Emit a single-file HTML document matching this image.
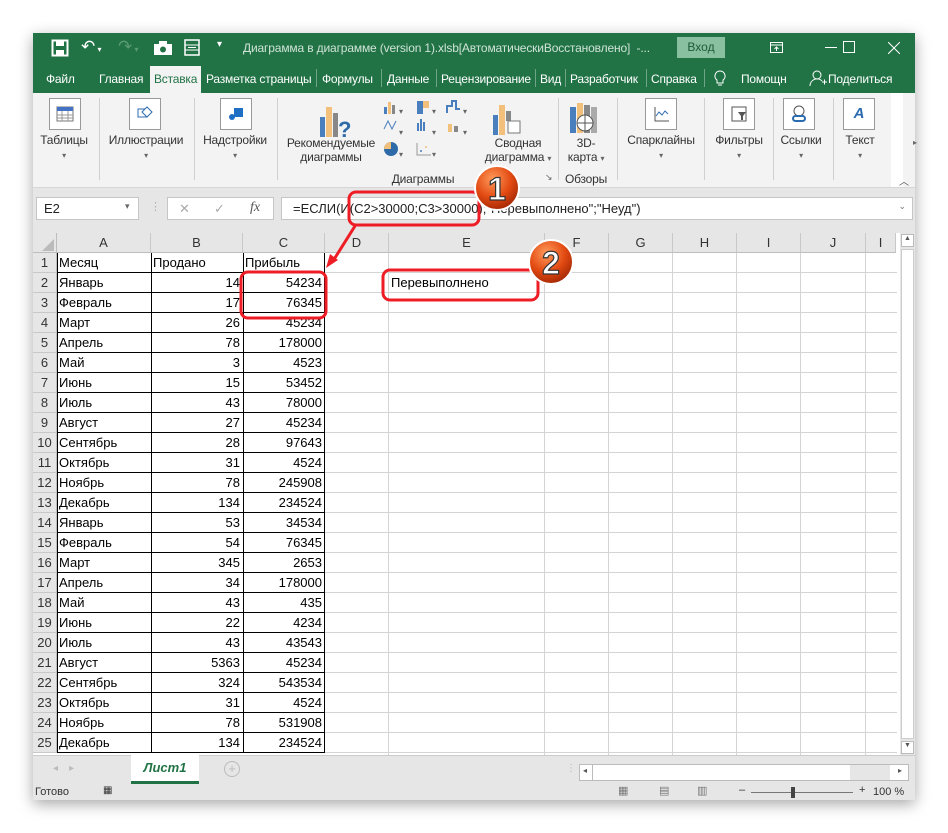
<!DOCTYPE html>
<html><head><meta charset="utf-8"><style>
*{box-sizing:border-box;margin:0;padding:0}
body{width:948px;height:833px;background:#fff;position:relative;overflow:hidden;font-family:"Liberation Sans","DejaVu Sans",sans-serif;font-size:13px;color:#222}
.abs{position:absolute}
#win{left:33px;top:33px;width:882px;height:767px;background:#e6e6e6;box-shadow:0 4px 14px rgba(0,0,0,.35)}
.tb{left:0;top:0;width:882px;height:30px;background:#217346;color:#cfe3d6}
.tabs{left:0;top:30px;width:882px;height:30px;background:#217346;color:#fff;font-size:12px;letter-spacing:-0.2px}
.tab{position:absolute;top:9px}
.rib{left:0;top:60px;width:882px;height:95px;background:#f3f3f3;border-bottom:1px solid #d6d6d6}
.rl{position:absolute;font-size:12px;color:#333;text-align:center;letter-spacing:-0.2px}
.ibox{position:absolute;width:32px;height:32px;border:1px solid #999;background:#fff}
.sep{position:absolute;top:5px;width:1px;height:82px;background:#d0d0d0}
.car{font-size:8px;color:#666}
.fb{left:0;top:163px;width:882px;height:30px}
.grid{left:0;top:200px;width:867px;height:522px;background:#fff}
.ch{position:absolute;top:0;height:20px;background:#e6e6e6;border-right:1px solid #c8c8c8;border-bottom:1px solid #bdbdbd;text-align:center;line-height:20px;font-size:13px;color:#333}
.rh{position:absolute;left:0;width:24px;height:20px;background:#e6e6e6;border-bottom:1px solid #c8c8c8;border-right:1px solid #bdbdbd;text-align:center;line-height:20px;font-size:13px;color:#333}
.c{position:absolute;height:20px;line-height:20px;font-size:13px;color:#000;white-space:nowrap;overflow:hidden;padding:0 2px}
</style></head><body>
<div id="win" class="abs">
 <div class="abs tb">
  <svg class="abs" style="left:18px;top:6px" width="18" height="18"><rect x="1.5" y="1.5" width="15" height="15" fill="none" stroke="#fff" stroke-width="2"/><rect x="5" y="2" width="8" height="5" fill="#fff"/><rect x="5" y="11" width="8" height="5" fill="#fff"/></svg>
  <div class="abs" style="left:48px;top:4px;color:#fff;font-size:17px">↶<span style="font-size:8px"> ▾</span></div>
  <div class="abs" style="left:85px;top:4px;color:#5a9a74;font-size:17px">↷<span style="font-size:8px"> ▾</span></div>
  <svg class="abs" style="left:121px;top:8px" width="18" height="14"><rect x="0" y="3" width="18" height="11" fill="#fff"/><rect x="5" y="0" width="8" height="4" fill="#fff"/><circle cx="9" cy="8.5" r="3" fill="#217346"/></svg>
  <svg class="abs" style="left:151px;top:6px" width="16" height="17"><rect x="1" y="1" width="14" height="15" fill="none" stroke="#fff" stroke-width="1.5"/><line x1="1" y1="6" x2="15" y2="6" stroke="#fff"/><line x1="1" y1="11" x2="15" y2="11" stroke="#fff"/><line x1="4" y1="8.5" x2="12" y2="8.5" stroke="#fff"/></svg>
  <div class="abs" style="left:184px;top:6px;color:#fff;font-size:10px">▾</div>
  <div class="abs" style="left:210px;top:8px;font-size:12px;letter-spacing:-0.15px">Диаграмма в диаграмме (version 1).xlsb[АвтоматическиВосстановлено]&nbsp; -...</div>
  <div class="abs" style="left:644px;top:4px;width:48px;height:21px;background:#89c09f;color:#1d5a36;text-align:center;line-height:21px;font-size:12px">Вход</div>
  <svg class="abs" style="left:737px;top:9px" width="13" height="11"><rect x=".5" y=".5" width="12" height="10" fill="none" stroke="#fff"/><line x1="0" y1="3" x2="13" y2="3" stroke="#fff"/><path d="M6.5 9V5M4.5 7l2-2 2 2" stroke="#fff" fill="none"/></svg>
  <div class="abs" style="left:792px;top:14px;width:12px;height:1px;background:#fff"></div>
  <div class="abs" style="left:810px;top:8px;width:12px;height:12px;border:1px solid #fff"></div>
  <svg class="abs" style="left:855px;top:9px" width="12" height="12"><path d="M0 0L12 12M12 0L0 12" stroke="#fff" stroke-width="1"/></svg>
 </div>
 <div class="abs tabs">
  <span class="tab" style="left:13px">Файл</span>
  <span class="tab" style="left:66px">Главная</span>
  <div class="abs" style="left:117px;top:3px;width:51px;height:27px;background:#f3f3f3;color:#217346;padding:6px 0 0 4px">Вставка</div>
  <span class="tab" style="left:173px">Разметка страницы</span>
  <span class="abs" style="left:283px;top:6px;width:1px;height:18px;background:#6fa487"></span>
  <span class="tab" style="left:289px">Формулы</span>
  <span class="abs" style="left:348px;top:6px;width:1px;height:18px;background:#6fa487"></span>
  <span class="tab" style="left:354px">Данные</span>
  <span class="abs" style="left:403px;top:6px;width:1px;height:18px;background:#6fa487"></span>
  <span class="tab" style="left:408px">Рецензирование</span>
  <span class="abs" style="left:502px;top:6px;width:1px;height:18px;background:#6fa487"></span>
  <span class="tab" style="left:507px">Вид</span>
  <span class="abs" style="left:532px;top:6px;width:1px;height:18px;background:#6fa487"></span>
  <span class="tab" style="left:537px">Разработчик</span>
  <span class="abs" style="left:613px;top:6px;width:1px;height:18px;background:#6fa487"></span>
  <span class="tab" style="left:618px">Справка</span>
  <span class="abs" style="left:671px;top:6px;width:1px;height:18px;background:#6fa487"></span>
  <svg class="abs" style="left:681px;top:7px" width="12" height="17"><path d="M6 1a5 5 0 0 0-3 9v3h6v-3a5 5 0 0 0-3-9zM4 15h4" stroke="#fff" fill="none"/></svg>
  <span class="tab" style="left:708px">Помощн</span>
  <svg class="abs" style="left:776px;top:6px" width="18" height="18"><circle cx="8" cy="6" r="4" stroke="#fff" fill="none"/><path d="M1 17a7 7 0 0 1 12-5M13 13h5M15.5 10.5v5" stroke="#fff" fill="none"/></svg>
  <span class="tab" style="left:795px">Поделиться</span>
 </div>
 <div class="abs rib">
  <div class="ibox" style="left:16px;top:5px"><svg width="30" height="30"><rect x="7" y="8" width="16" height="14" fill="#fff" stroke="#777"/><rect x="7" y="8" width="16" height="4" fill="#4472c4"/><path d="M7 16h16M7 19h16M12 12v10M18 12v10" stroke="#999"/></svg></div>
  <div class="rl" style="left:0;top:40px;width:62px">Таблицы<br><span class="car">▾</span></div>
  <div class="sep" style="left:66px"></div>
  <div class="ibox" style="left:96px;top:5px"><svg width="30" height="30"><rect x="8" y="10" width="8" height="8" fill="none" stroke="#2b6cb0"/><path d="M17 8l5 5-5 5-5-5z" fill="#fff" stroke="#2b6cb0"/></svg></div>
  <div class="rl" style="left:70px;top:40px;width:86px">Иллюстрации<br><span class="car">▾</span></div>
  <div class="sep" style="left:161px"></div>
  <div class="ibox" style="left:187px;top:5px"><svg width="30" height="30"><rect x="13" y="9" width="9" height="9" fill="#1f6fc5"/><circle cx="11" cy="18" r="3" fill="#1f6fc5"/></svg></div>
  <div class="rl" style="left:164px;top:40px;width:76px">Надстройки<br><span class="car">▾</span></div>
  <div class="sep" style="left:244px"></div>
  <svg class="abs" style="left:285px;top:10px" width="40" height="40"><rect x="2" y="14" width="5" height="20" fill="#4a7fbd"/><rect x="8" y="4" width="6" height="30" fill="#f2c07a"/><rect x="15" y="10" width="5" height="24" fill="#888"/><text x="20" y="34" font-size="22" font-weight="bold" fill="#2e6aa8" font-family="Liberation Sans">?</text></svg>
  <div class="rl" style="left:248px;top:43px;width:100px">Рекомендуемые<br>диаграммы</div>
  <svg class="abs" style="left:350px;top:6px" width="90" height="68"><rect x="1" y="8" width="3" height="7" fill="#4a7fbd"/><rect x="5" y="3" width="3" height="12" fill="#f2c07a"/><rect x="9" y="6" width="3" height="9" fill="#888"/><rect x="34" y="2" width="6" height="13" fill="#4a7fbd"/><rect x="40" y="2" width="6" height="7" fill="#f2c07a"/><path d="M64 14v-7h5v-5h4v8h4" stroke="#4a7fbd" stroke-width="2" fill="none"/><path d="M1 30l4-8 4 8 4-8" stroke="#4a7fbd" fill="none"/><rect x="34" y="24" width="2" height="8" fill="#4a7fbd"/><rect x="37" y="20" width="2" height="12" fill="#4a7fbd"/><rect x="40" y="23" width="2" height="9" fill="#4a7fbd"/><rect x="65" y="25" width="4" height="8" fill="#f2c07a"/><rect x="71" y="27" width="4" height="6" fill="#888"/><circle cx="8" cy="50" r="7" fill="#2e6aa8"/><path d="M8 50V43A7 7 0 0 0 1 50z" fill="#f2c07a"/><path d="M34 44v12h14" stroke="#999" fill="none"/><circle cx="38" cy="52" r="1" fill="#4a7fbd"/><circle cx="43" cy="48" r="1" fill="#f2c07a"/></svg>
  <div class="abs car" style="left:366px;top:14px">▾</div><div class="abs car" style="left:399px;top:14px">▾</div><div class="abs car" style="left:430px;top:14px">▾</div>
  <div class="abs car" style="left:366px;top:35px">▾</div><div class="abs car" style="left:399px;top:35px">▾</div><div class="abs car" style="left:430px;top:35px">▾</div>
  <div class="abs car" style="left:366px;top:57px">▾</div><div class="abs car" style="left:399px;top:57px">▾</div>
  <div class="rl" style="left:340px;top:79px;width:100px">Диаграммы</div>
  <svg class="abs" style="left:460px;top:10px" width="32" height="32"><rect x="0" y="12" width="5" height="20" fill="#4a7fbd"/><rect x="6" y="2" width="6" height="30" fill="#f2c07a"/><rect x="13" y="8" width="5" height="10" fill="#888"/><rect x="15" y="18" width="12" height="12" fill="#fff" stroke="#777"/></svg>
  <div class="rl" style="left:445px;top:43px;width:80px">Сводная<br>диаграмма <span class="car">▾</span></div>
  <div class="abs" style="left:512px;top:79px;font-size:9px;color:#666">↘</div>
  <div class="sep" style="left:525px"></div>
  <svg class="abs" style="left:537px;top:10px" width="30" height="32"><rect x="0" y="4" width="6" height="26" fill="#4a7fbd"/><rect x="7" y="0" width="6" height="30" fill="#f2c07a"/><rect x="14" y="2" width="6" height="28" fill="#888"/><rect x="21" y="4" width="6" height="26" fill="#aaa"/><circle cx="15" cy="20" r="8" fill="#fff" stroke="#555"/><path d="M7 20h16M15 12v16" stroke="#555"/></svg>
  <div class="rl" style="left:525px;top:43px;width:56px">3D-<br>карта <span class="car">▾</span></div>
  <div class="rl" style="left:525px;top:79px;width:56px">Обзоры</div>
  <div class="sep" style="left:584px"></div>
  <div class="ibox" style="left:612px;top:5px"><svg width="30" height="30"><path d="M9 8v14h14" stroke="#555" fill="none"/><path d="M10 17l3-4 3 3 3-4 3 3" stroke="#2b6cb0" fill="none"/></svg></div>
  <div class="rl" style="left:588px;top:40px;width:80px">Спарклайны<br><span class="car">▾</span></div>
  <div class="sep" style="left:671px"></div>
  <div class="ibox" style="left:690px;top:5px"><svg width="30" height="30"><rect x="8" y="8" width="14" height="14" fill="none" stroke="#555"/><path d="M14 13h8l-3 4v4h-2v-4z" fill="#555"/></svg></div>
  <div class="rl" style="left:675px;top:40px;width:62px">Фильтры<br><span class="car">▾</span></div>
  <div class="sep" style="left:740px"></div>
  <div class="ibox" style="left:750px;top:5px"><svg width="30" height="30"><circle cx="15" cy="12" r="5" fill="none" stroke="#555"/><rect x="9" y="17" width="12" height="5" rx="2.5" fill="none" stroke="#2b6cb0" stroke-width="2"/></svg></div>
  <div class="rl" style="left:740px;top:40px;width:56px">Ссылки<br><span class="car">▾</span></div>
  <div class="sep" style="left:800px"></div>
  <div class="ibox" style="left:810px;top:5px"><div style="color:#2b6cb0;font-style:italic;font-weight:bold;font-size:15px;text-align:center;line-height:30px">A</div></div>
  <div class="rl" style="left:803px;top:40px;width:48px">Текст<br><span class="car">▾</span></div>
  <div class="abs" style="left:858px;top:0;width:12px;height:94px;background:#fff"></div>
  <div class="abs car" style="left:880px;top:45px">▸</div>
  <div class="abs" style="left:866px;top:80px;font-size:10px;color:#555">︿</div>
 </div>
 <div class="abs fb">
  <div class="abs" style="left:3px;top:1px;width:103px;height:23px;background:#fff;border:1px solid #c6c6c6;padding:3px 0 0 7px">E2<span class="abs" style="left:88px;top:3px;font-size:9px;color:#666">▾</span></div>
  <div class="abs" style="left:117px;top:4px;color:#aaa;font-size:11px">⋮</div>
  <div class="abs" style="left:134px;top:1px;width:107px;height:23px;background:#fff;border:1px solid #c6c6c6;color:#aaa">
   <span class="abs" style="left:11px;top:3px">✕</span><span class="abs" style="left:46px;top:3px">✓</span><span class="abs" style="left:82px;top:2px;color:#555;font-style:italic;font-family:'Liberation Serif',serif;font-size:14px">fx</span></div>
  <div class="abs" style="left:248px;top:1px;width:632px;height:23px;background:#fff;border:1px solid #c6c6c6;padding:3px 0 0 11px">=ЕСЛИ(И(C2&gt;30000;C3&gt;30000);"Перевыполнено";"Неуд")<span class="abs" style="right:6px;top:3px;font-size:9px;color:#777">⌄</span></div>
 </div>
 <div class="abs grid">
  <div class="abs" style="left:0;top:0;width:24px;height:20px;background:#e6e6e6;border-right:1px solid #bdbdbd;border-bottom:1px solid #bdbdbd"><svg class="abs" style="left:9px;top:6px" width="12" height="12"><path d="M12 0V12H0z" fill="#bbb"/></svg></div>
  <div class="ch" style="left:24px;width:94px">A</div>
  <div class="ch" style="left:118px;width:92px">B</div>
  <div class="ch" style="left:210px;width:82px">C</div>
  <div class="ch" style="left:292px;width:64px">D</div>
  <div class="ch" style="left:356px;width:156px">E</div>
  <div class="ch" style="left:512px;width:64px">F</div>
  <div class="ch" style="left:576px;width:64px">G</div>
  <div class="ch" style="left:640px;width:64px">H</div>
  <div class="ch" style="left:704px;width:64px">I</div>
  <div class="ch" style="left:768px;width:65px">J</div>
  <div class="ch" style="left:833px;width:30px">I</div>
  <svg class="abs" style="left:24px;top:20px" width="840" height="502">
   <g stroke="#d4d4d4" stroke-width="1">
    <path d="M331.5 0V502M487.5 0V502M551.5 0V502M615.5 0V502M679.5 0V502M743.5 0V502M808.5 0V502"/>
    <path d="M268 19.5H840M268 39.5H840M268 59.5H840M268 79.5H840M268 99.5H840M268 119.5H840M268 139.5H840M268 159.5H840M268 179.5H840M268 199.5H840M268 219.5H840M268 239.5H840M268 259.5H840M268 279.5H840M268 299.5H840M268 319.5H840M268 339.5H840M268 359.5H840M268 379.5H840M268 399.5H840M268 419.5H840M268 439.5H840M268 459.5H840M268 479.5H840M268 499.5H840"/>
   </g>
   <g stroke="#000" stroke-width="1">
    <path d="M0.5 0V500M94.5 0V500M186.5 0V500M267.5 0V500"/>
    <path d="M0 19.5H268M0 39.5H268M0 59.5H268M0 79.5H268M0 99.5H268M0 119.5H268M0 139.5H268M0 159.5H268M0 179.5H268M0 199.5H268M0 219.5H268M0 239.5H268M0 259.5H268M0 279.5H268M0 299.5H268M0 319.5H268M0 339.5H268M0 359.5H268M0 379.5H268M0 399.5H268M0 419.5H268M0 439.5H268M0 459.5H268M0 479.5H268M0 499.5H268"/>
   </g>
  </svg>
  <div class="abs" style="left:867px;top:0;width:15px;height:522px;background:#e6e6e6"></div>
 </div>
 <div class="abs" style="left:867px;top:200px;width:15px;height:525px;background:#e6e6e6">
  <div class="abs" style="left:1px;top:1px;width:13px;height:13px;background:#fff;border:1px solid #bbb;font-size:7px;text-align:center;color:#555">▲</div>
  <div class="abs" style="left:1px;top:16px;width:13px;height:490px;background:#fff;border:1px solid #ccc"></div>
  <div class="abs" style="left:1px;top:508px;width:13px;height:13px;background:#fff;border:1px solid #bbb;font-size:7px;text-align:center;color:#555">▼</div>
 </div>
 <div class="abs" style="left:0;top:722px;width:882px;height:30px;background:#e6e6e6;border-top:1px solid #ccc">
  <span class="abs" style="left:20px;top:7px;color:#bbb;font-size:10px">◂ &nbsp;&nbsp; ▸</span>
  <div class="abs" style="left:98px;top:-1px;width:68px;height:29px;background:#fff;border-bottom:3px solid #217346;color:#217346;font-weight:bold;font-style:italic;text-align:center;line-height:26px;font-size:13px">Лист1</div>
  <span class="abs" style="left:191px;top:5px;width:16px;height:16px;border:1px solid #bbb;border-radius:50%;color:#bbb;text-align:center;line-height:14px;font-size:13px">+</span>
  <span class="abs" style="left:533px;top:7px;color:#bbb;font-size:10px">⋮</span>
  <div class="abs" style="left:546px;top:8px;width:330px;height:17px;background:#fff;border:1px solid #bbb">
   <span class="abs" style="left:3px;top:1px;font-size:8px;color:#555">◂</span>
   <div class="abs" style="left:12px;top:-1px;width:1px;height:17px;background:#bbb"></div>
   <div class="abs" style="left:270px;top:0;width:40px;height:15px;background:#e6e6e6"></div>
   <span class="abs" style="left:318px;top:1px;font-size:8px;color:#555">▸</span>
  </div>
 </div>
 <div class="abs" style="left:0;top:752px;width:882px;height:15px;background:#e6e6e6;font-size:11px;color:#333">
  <span class="abs" style="left:2px;top:1px">Готово</span>
  <span class="abs" style="left:70px;top:0;font-size:10px">▦</span>
  <span class="abs" style="left:585px;top:-1px;color:#777">▦</span>
  <span class="abs" style="left:626px;top:-1px;color:#777">▤</span>
  <span class="abs" style="left:664px;top:-1px;color:#777">▥</span>
  <span class="abs" style="left:706px;top:-1px">–</span>
  <div class="abs" style="left:718px;top:7px;width:102px;height:1px;background:#777"></div>
  <div class="abs" style="left:758px;top:2px;width:4px;height:11px;background:#444"></div>
  <span class="abs" style="left:826px;top:-1px">+</span>
  <span class="abs" style="left:840px;top:1px">100 %</span>
 </div>
</div>
<div id="cells"></div>
<svg class="abs" style="left:0;top:0" width="948" height="833">
 <defs><radialGradient id="g" cx="40%" cy="30%" r="70%"><stop offset="0" stop-color="#ff9a5a"/><stop offset=".6" stop-color="#e24a12"/><stop offset="1" stop-color="#a82a05"/></radialGradient></defs>
 <g fill="none" stroke="#ee1c24" stroke-width="3">
  <rect x="349" y="192" width="130" height="33" rx="7"/>
  <rect x="241" y="272" width="85" height="46" rx="7"/>
  <rect x="383" y="270" width="155" height="30" rx="7"/>
  <path d="M355 226L333 261"/>
 </g>
 <path d="M326 268l4-14 8 6z" fill="#ee1c24"/>
 <circle cx="497" cy="188" r="22" fill="url(#g)" stroke="#fff" stroke-width="2"/>
 <text x="497" y="200" text-anchor="middle" font-size="32" font-weight="bold" fill="#fff" stroke="#333" stroke-width="1.2" font-family="Liberation Sans">1</text>
 <circle cx="551" cy="262" r="22" fill="url(#g)" stroke="#fff" stroke-width="2"/>
 <text x="551" y="274" text-anchor="middle" font-size="32" font-weight="bold" fill="#fff" stroke="#333" stroke-width="1.2" font-family="Liberation Sans">2</text>
</svg>
<script>
var d=[["Январь",14,54234],["Февраль",17,76345],["Март",26,45234],["Апрель",78,178000],["Май",3,4523],["Июнь",15,53452],["Июль",43,78000],["Август",27,45234],["Сентябрь",28,97643],["Октябрь",31,4524],["Ноябрь",78,245908],["Декабрь",134,234524],["Январь",53,34534],["Февраль",54,76345],["Март",345,2653],["Апрель",34,178000],["Май",43,435],["Июнь",22,4234],["Июль",43,43543],["Август",5363,45234],["Сентябрь",324,543534],["Октябрь",31,4524],["Ноябрь",78,531908],["Декабрь",134,234524]];
var h='';
function rowTop(i){return 253+i*20;}
for(var i=0;i<25;i++){var t=rowTop(i);
h+='<div class="rh abs" style="left:33px;top:'+t+'px">'+(i+1)+'</div>';}
h+='<div class="c abs" style="left:57px;top:253px">Месяц</div><div class="c abs" style="left:151px;top:253px">Продано</div><div class="c abs" style="left:243px;top:253px">Прибыль</div>';
for(var i=0;i<24;i++){var t=rowTop(i+1);
h+='<div class="c abs" style="left:57px;top:'+t+'px">'+d[i][0]+'</div>';
h+='<div class="c abs" style="left:151px;width:91px;text-align:right;top:'+t+'px">'+d[i][1]+'</div>';
h+='<div class="c abs" style="left:243px;width:81px;text-align:right;top:'+t+'px">'+d[i][2]+'</div>';}
h+='<div class="c abs" style="left:389px;top:273px">Перевыполнено</div>';
document.getElementById('cells').innerHTML=h;
</script>
</body></html>
